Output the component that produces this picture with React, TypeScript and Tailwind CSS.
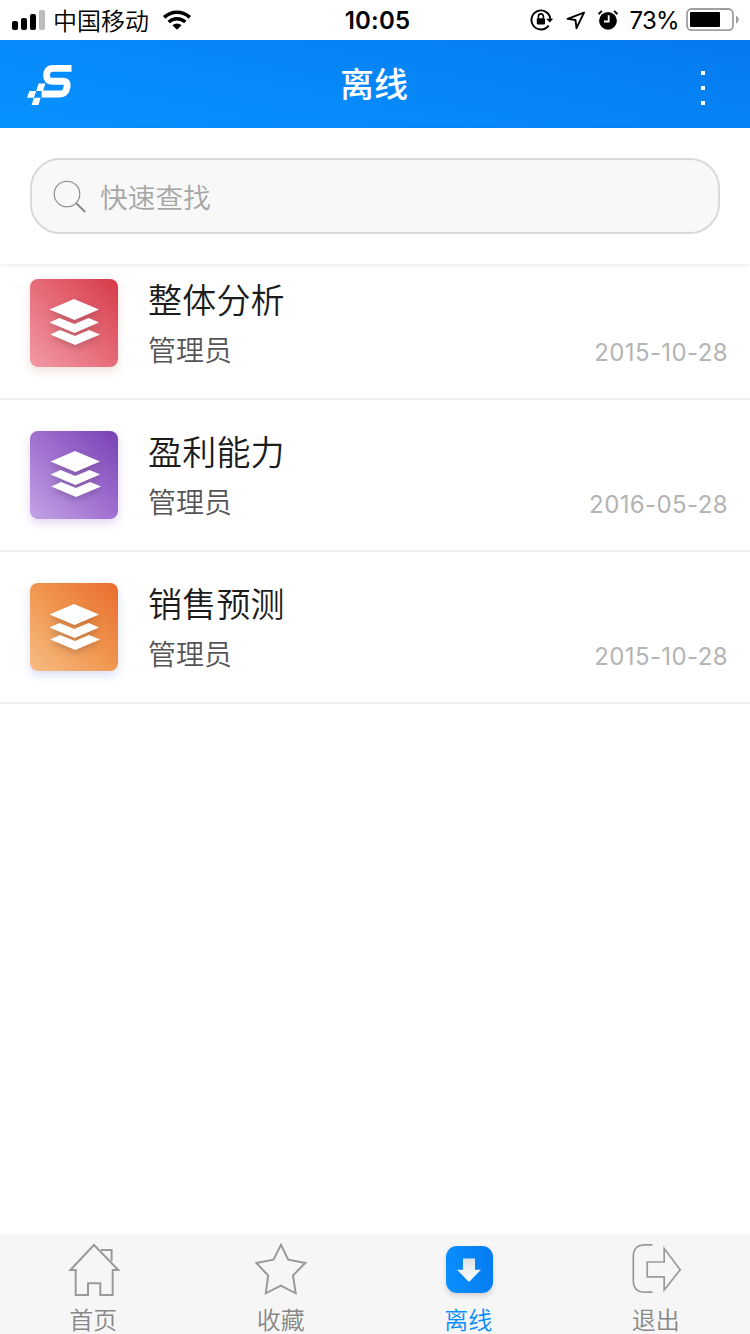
import React from "react";

const FONT = "font-[Inter,'Noto_Sans_CJK_SC',sans-serif]";

function StatusBar() {
  return (
    <div className="flex h-10 shrink-0 items-center bg-white text-black">
      <div className="flex flex-1 items-center pl-3">
        <svg width="33" height="20" viewBox="0 0 33 20" aria-hidden="true">
          <rect x="0" y="11" width="6" height="9" rx="2" />
          <rect x="9" y="8" width="6" height="12" rx="2" />
          <rect x="18" y="4" width="6" height="16" rx="2" />
          <rect x="27" y="0" width="6" height="20" rx="2" fill="#bcbcbc" />
        </svg>
        <span className="mt-[3px] ml-2 text-2xl leading-10 font-[350]">中国移动</span>
        <svg className="ml-[13px]" width="30" height="22" viewBox="0 0 30 22" fill="none" stroke="#000" aria-hidden="true">
          <path d="M2.2 8.4A18.5 18.5 0 0 1 27.8 8.4" strokeWidth="3.7" />
          <path d="M6.7 13A12 12 0 0 1 23.3 13" strokeWidth="3.5" />
          <path d="M15 20.8L10.4 16.3A6.5 6.5 0 0 1 19.6 16.3Z" fill="#000" stroke="none" />
        </svg>
      </div>
      <span className="mt-0.5 pl-1 text-2xl leading-10 font-semibold tracking-[0.2px]">10:05</span>
      <div className="flex flex-1 items-center justify-end pr-[11px]">
        <svg width="24" height="22" viewBox="0 0 24 22" fill="none" stroke="#000" aria-hidden="true">
          <path d="M18.6 16.6A9.5 9.5 0 1 1 20.4 10" strokeWidth="1.9" />
          <path d="M16.2 9.7H23.2L19.8 13.6Z" fill="#000" stroke="none" />
          <rect x="6.8" y="9.2" width="8.2" height="6.4" rx="1" fill="#000" stroke="none" />
          <path d="M8.4 9.5V7.4a2.5 2.5 0 0 1 5 0v2.1" strokeWidth="1.6" />
        </svg>
        <svg className="ml-3" width="20" height="20" viewBox="0 0 20 20" fill="none" stroke="#000" strokeWidth="1.9" strokeLinejoin="round" aria-hidden="true">
          <path d="M1.6 8.9L18 2.6L10.5 18.2L9.5 10Z" />
        </svg>
        <svg className="ml-3" width="20" height="20" viewBox="0 0 20 20" fill="none" aria-hidden="true">
          <circle cx="10" cy="10.8" r="8.9" fill="#000" />
          <path d="M.8 4.2A12 12 0 0 1 4 1M19.2 4.2A12 12 0 0 0 16 1" stroke="#000" strokeWidth="2" />
          <path d="M10.7 5.2V11.5H6" stroke="#fff" strokeWidth="1.8" />
        </svg>
        <span className="mt-0.5 ml-3 text-2xl leading-10 tracking-[-0.7px]">73%</span>
        <svg className="ml-[7px]" width="53" height="24" viewBox="0 0 53 24" aria-hidden="true">
          <rect x="1" y="1" width="46" height="21.2" rx="4.5" fill="none" stroke="#9f9f9f" strokeWidth="1.8" />
          <rect x="4" y="4" width="30" height="15" rx="1" />
          <path d="M50 7.5Q52.8 9 52.8 11.6T50 15.7Z" fill="#9f9f9f" />
        </svg>
      </div>
    </div>
  );
}

function TitleBar() {
  return (
    <header className="flex h-[88px] shrink-0 items-center bg-[linear-gradient(12deg,#0893ff_0%,#0687f8_50%,#047aee_100%)] text-white">
      <div className="w-[340px] pl-[26px]">
        <svg width="48" height="42" viewBox="0 0 48 42" fill="none" aria-hidden="true">
          <path d="M45.5 5.4H27C22.5 5.4 20.6 8 20.6 12C20.6 16.2 22.3 18.2 26 18.2H36.5C41 18.2 41.6 20.5 41 24C40.2 28.6 38.5 31 34 31H15.6" stroke="#fff" strokeWidth="6.9" />
          <path d="M12.6 20.5H19.4L17 28H10.2Z M3.4 28H10.2L7.9 34.7H1Z M7.9 34.7H14.6L12.5 42H5.6Z" fill="#fff" />
        </svg>
      </div>
      <h1 className="mt-px text-[34px] leading-[84px] font-medium">离线</h1>
      <div className="flex flex-1 justify-end pr-[45px]">
        <div className="mt-[7px] flex flex-col gap-[11px]">
          <i className="size-1 bg-white" />
          <i className="size-1 bg-white" />
          <i className="size-1 bg-white" />
        </div>
      </div>
    </header>
  );
}

function SearchBar() {
  return (
    <div className="z-10 h-[136px] shrink-0 bg-white px-[30px] pt-[30px] shadow-[0_1px_5px_rgba(0,0,0,0.09)]">
      <div className="flex h-[76px] items-center rounded-[30px] border-2 border-[#d9d9d9] bg-[#f8f8f8] pl-[21px]">
        <svg className="mt-0.5" width="34" height="34" viewBox="0 0 34 34" fill="none" stroke="#888" aria-hidden="true">
          <circle cx="14" cy="14" r="12.8" strokeWidth="1.1" />
          <path d="M23.3 23.3L32.2 32" strokeWidth="2" />
        </svg>
        <span className="mt-1 ml-[13px] text-[27.7px] leading-[68px] font-[350] text-[#a6a6a6]">快速查找</span>
      </div>
    </div>
  );
}

type Item = { title: string; owner: string; date: string; tile: string; glyph: string };

const items: Item[] = [
  {
    title: "整体分析",
    owner: "管理员",
    date: "2015-10-28",
    tile: "bg-[linear-gradient(45deg,#f29aa6_0%,#e66b79_50%,#d63a48_100%)] shadow-[0_4px_10px_rgba(190,130,110,0.25)]",
    glyph: "mr-px mb-0.5",
  },
  {
    title: "盈利能力",
    owner: "管理员",
    date: "2016-05-28",
    tile: "bg-[linear-gradient(45deg,#c4a3e6_0%,#a070d0_50%,#7741b2_100%)] shadow-[0_4px_10px_rgba(140,90,210,0.25)]",
    glyph: "ml-px mb-0.5",
  },
  {
    title: "销售预测",
    owner: "管理员",
    date: "2015-10-28",
    tile: "bg-[linear-gradient(45deg,#f6bc84_0%,#f0964f_50%,#e96c2d_100%)] shadow-[0_4px_10px_rgba(80,110,210,0.22)]",
    glyph: "mr-px",
  },
];

function Row({ item }: { item: Item }) {
  return (
    <li className="flex h-[152px] items-start border-b-2 border-[#eee] pt-[31px] pr-[22px] pl-[30px]">
      <div className={`flex size-[88px] items-center justify-center rounded-lg ${item.tile}`}>
        <svg
          className={`drop-shadow-[0_3px_3px_rgba(0,0,0,0.18)] ${item.glyph}`}
          width="52"
          height="48"
          viewBox="0 0 52 48"
          fill="#fff"
          aria-hidden="true"
        >
          <path d="M26 1L51 11.5L26.5 22L1.5 11.5Z" />
          <path d="M11.5 19.9L26.3 26L40.7 19.9L51 24.6L26.5 35L1.5 24.6Z" />
          <path d="M12 31.9L27 38L41 31.9L52 36.6L27.2 47L2.3 36.6Z" />
        </svg>
      </div>
      <div className="mt-px ml-[30px] flex-1">
        <h2 className="text-[34px] leading-[42px] font-[350] tracking-[0.2px] text-[#1c1c1c]">{item.title}</h2>
        <div className="mt-2 flex items-start justify-between leading-[42px]">
          <span className="text-[28px] font-[350] text-[#555]">{item.owner}</span>
          <time className="mt-0.5 text-2xl leading-[42px] tracking-[0.4px] text-[#b4b4b4]">{item.date}</time>
        </div>
      </div>
    </li>
  );
}

const line = { fill: "none", stroke: "#9a9a9a", strokeWidth: 2 };

function HomeIcon() {
  return (
    <svg width="56" height="56" viewBox="0 0 56 56" {...line} aria-hidden="true">
      <path d="M28 2L4.3 27H9.7V52H22V40.2H34.3V52H46.7V27H52.3Z" />
      <path d="M35 7H45.6V18" />
    </svg>
  );
}

function StarIcon() {
  return (
    <svg width="56" height="56" viewBox="0 0 56 56" {...line} aria-hidden="true">
      <path d="M28 1.8L35.2 16.7L52.3 20L40 32.5L42.7 50.3L27.8 42.6L12.8 50.3L15.2 32.5L3.4 20L20.5 16.7Z" />
    </svg>
  );
}

function OfflineIcon() {
  return (
    <span className="flex size-14 items-center justify-center">
      <span className="mb-1 ml-px flex size-[47px] items-center justify-center rounded-[11px] bg-[linear-gradient(80deg,#0a90ff,#057bef)] shadow-[0_3px_5px_rgba(0,0,0,0.15)]">
        <svg width="26" height="26" viewBox="0 0 26 26" aria-hidden="true">
          <defs>
            <linearGradient id="arrow" x1="0" y1="0" x2="0" y2="1">
              <stop offset="0" stopColor="#dfe2e5" />
              <stop offset="1" stopColor="#fff" />
            </linearGradient>
          </defs>
          <path d="M7 2.5H19V13.7H25L13 26L1 13.7H7Z" fill="url(#arrow)" />
        </svg>
      </span>
    </span>
  );
}

function ExitIcon() {
  return (
    <svg width="56" height="56" viewBox="0 0 56 56" {...line} strokeWidth={1.7} aria-hidden="true">
      <path d="M24.5 1.8H17Q5.3 1.8 5.3 13.5V37.5Q5.3 49.2 17 49.2H24.5" />
      <path d="M19.2 19H36.2V5.6L52.2 26.7L36.2 47V33.9H19.2Z" />
    </svg>
  );
}

const tabs = [
  { label: "首页", icon: <HomeIcon />, color: "text-[#888]" },
  { label: "收藏", icon: <StarIcon />, color: "text-[#888]" },
  { label: "离线", icon: <OfflineIcon />, color: "text-[#078dfb]" },
  { label: "退出", icon: <ExitIcon />, color: "text-[#888]" },
];

function TabBar() {
  return (
    <nav className="grid h-[100px] shrink-0 grid-cols-4 bg-[#f6f6f6]">
      {tabs.map((tab) => (
        <div key={tab.label} className="flex flex-col items-center pt-[9px]">
          {tab.icon}
          <span className={`mt-[7px] mr-px text-2xl leading-[30px] font-[350] ${tab.color}`}>{tab.label}</span>
        </div>
      ))}
    </nav>
  );
}

export default function App() {
  return (
    <div className={`flex h-[1334px] w-[750px] flex-col overflow-hidden bg-white ${FONT}`}>
      <StatusBar />
      <TitleBar />
      <SearchBar />
      <ul className="-mt-4 flex-1">
        {items.map((item) => (
          <Row key={item.title} item={item} />
        ))}
      </ul>
      <TabBar />
    </div>
  );
}
